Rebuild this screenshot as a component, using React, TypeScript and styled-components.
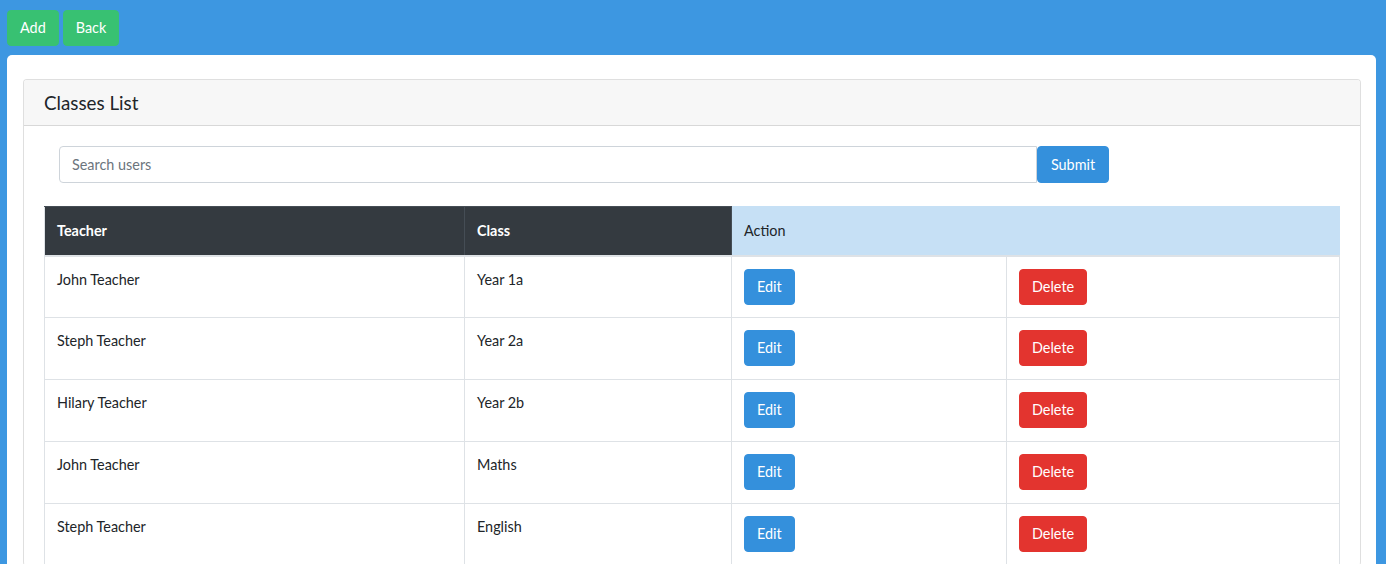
import React from "react";
import styled, { createGlobalStyle } from "styled-components";

const GlobalStyle = createGlobalStyle`
  html, body { margin: 0; padding: 0; }
  body {
    background: #3d97e1;
    font-family: "Lato", "Noto Sans", sans-serif;
    font-size: 14.4px;
    line-height: 1.5;
    color: #212529;
  }
  * { box-sizing: border-box; }
`;

const Page = styled.div`
  padding: 10px 10px 0 7px;
  min-height: 564px;
  overflow: hidden;
`;

const Toolbar = styled.div`
  display: flex;
  gap: 4px;
  margin-bottom: 9px;
`;

const Btn = styled.button<{ $variant: "success" | "primary" | "danger" }>`
  font-family: inherit;
  font-size: 14.4px;
  line-height: 22px;
  padding: 6px 12px;
  border-radius: 4px;
  border: 1px solid transparent;
  color: #fff;
  cursor: pointer;
  background: ${(p) =>
    p.$variant === "success" ? "#38c172" : p.$variant === "primary" ? "#3490dc" : "#e3342f"};
  border-color: ${(p) =>
    p.$variant === "success" ? "#38c172" : p.$variant === "primary" ? "#3490dc" : "#e3342f"};
`;

const Sheet = styled.div`
  background: #fff;
  border-radius: 5px;
  width: 1369px;
  padding: 24px 15px 0 16px;
  height: 520px;
`;

const Card = styled.div`
  border: 1px solid rgba(0, 0, 0, 0.125);
  border-radius: 4px;
  border-bottom: none;
  overflow: hidden;
`;

const CardHeader = styled.div`
  background: #f7f7f7;
  border-bottom: 1px solid rgba(0, 0, 0, 0.125);
  padding: 12px 20px;
  font-size: 18.8px;
  line-height: 21px;
`;

const CardBody = styled.div`
  padding: 20px 20px 0;
`;

const SearchForm = styled.form`
  display: flex;
  padding-left: 15px;
  margin-bottom: 23px;
`;

const SearchInput = styled.input`
  flex: 0 0 978px;
  height: 37px;
  padding: 6px 12px;
  font-family: inherit;
  font-size: 14.4px;
  color: #495057;
  border: 1px solid #ced4da;
  border-radius: 4px 0 0 4px;
  &::placeholder { color: #6c757d; }
`;

const SubmitBtn = styled(Btn)`
  width: 72px;
  height: 37px;
`;

const Table = styled.table`
  width: 1295px;
  border-collapse: collapse;
  table-layout: fixed;
`;

const HeadCell = styled.th<{ $tone: "dark" | "primary" }>`
  text-align: left;
  padding: 12px;
  line-height: 21.6px;
  height: 49px;
  font-weight: ${(p) => (p.$tone === "dark" ? 700 : 400)};
  color: ${(p) => (p.$tone === "dark" ? "#fff" : "#212529")};
  background: ${(p) => (p.$tone === "dark" ? "#343a40" : "#c6e0f5")};
  border: 1px solid ${(p) => (p.$tone === "dark" ? "#454d55" : "#c6e0f5")};
  border-bottom: 2px solid #dee2e6;
  border-left: ${(p) => (p.$tone === "dark" ? "1px solid #dee2e6" : "none")};
`;

const Cell = styled.td`
  vertical-align: top;
  padding: 12px;
  height: 62px;
  line-height: 21.6px;
  border: 1px solid #dee2e6;
`;

const rows = [
  ["John Teacher", "Year 1a"],
  ["Steph Teacher", "Year 2a"],
  ["Hilary Teacher", "Year 2b"],
  ["John Teacher", "Maths"],
  ["Steph Teacher", "English"],
];

export default function App() {
  return (
    <>
      <GlobalStyle />
      <Page>
        <Toolbar>
          <Btn $variant="success">Add</Btn>
          <Btn $variant="success">Back</Btn>
        </Toolbar>
        <Sheet>
          <Card>
            <CardHeader>Classes List</CardHeader>
            <CardBody>
              <SearchForm onSubmit={(e) => e.preventDefault()}>
                <SearchInput placeholder="Search users" />
                <SubmitBtn $variant="primary" type="submit">Submit</SubmitBtn>
              </SearchForm>
              <Table>
                <colgroup>
                  <col style={{ width: 420 }} />
                  <col style={{ width: 267 }} />
                  <col style={{ width: 275 }} />
                  <col style={{ width: 333 }} />
                </colgroup>
                <thead>
                  <tr>
                    <HeadCell $tone="dark">Teacher</HeadCell>
                    <HeadCell $tone="dark">Class</HeadCell>
                    <HeadCell $tone="primary" colSpan={2}>Action</HeadCell>
                  </tr>
                </thead>
                <tbody>
                  {rows.map(([t, c], i) => (
                    <tr key={i}>
                      <Cell>{t}</Cell>
                      <Cell>{c}</Cell>
                      <Cell><Btn $variant="primary">Edit</Btn></Cell>
                      <Cell><Btn $variant="danger">Delete</Btn></Cell>
                    </tr>
                  ))}
                </tbody>
              </Table>
            </CardBody>
          </Card>
        </Sheet>
      </Page>
    </>
  );
}
